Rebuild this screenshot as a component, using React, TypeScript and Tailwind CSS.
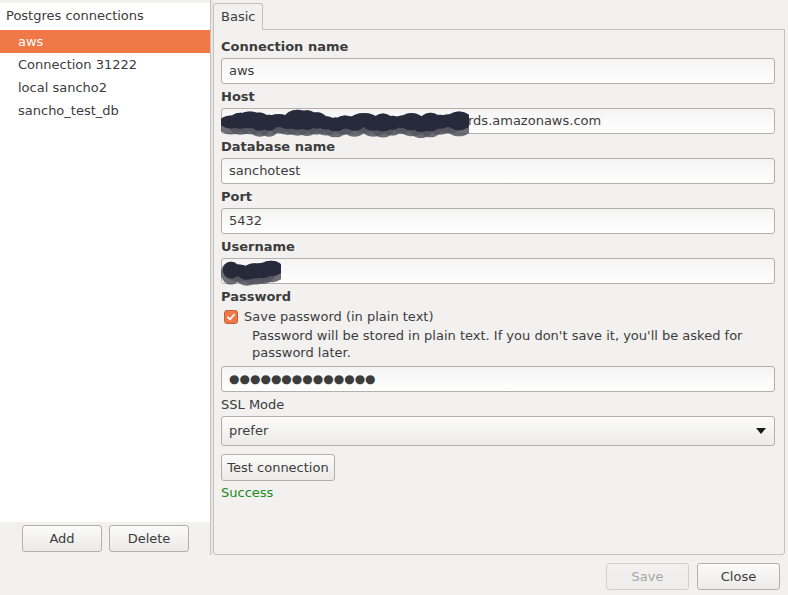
import * as React from "react"

const connections = ["aws", "Connection 31222", "local sancho2", "sancho_test_db"]

function Scribble({ w, h, seed, r = 1 }: { w: number; h: number; seed: number; r?: number }) {
  // redaction scribble drawn over the field text
  const blobs: { cx: number; cy: number; rx: number; ry: number }[] = []
  let s = seed
  const rnd = () => {
    s = (s * 9301 + 49297) % 233280
    return s / 233280
  }
  const n = Math.max(4, Math.round(w / 10))
  for (let i = 0; i < n; i++) {
    blobs.push({
      cx: 10 + (i * (w - 20)) / (n - 1),
      cy: h / 2 + (rnd() - 0.5) * 5,
      rx: (10 + rnd() * 6) * r,
      ry: (9 + rnd() * 4) * r,
    })
  }
  return (
    <svg width={w} height={h} viewBox={`0 0 ${w} ${h}`} className="block">
      {blobs.map((b, i) => (
        <ellipse key={"g" + i} cx={b.cx} cy={b.cy + 3} rx={b.rx} ry={b.ry} fill="#53555f" opacity={0.85} />
      ))}
      {blobs.map((b, i) => (
        <ellipse key={"d" + i} cx={b.cx} cy={b.cy} rx={b.rx - 2} ry={b.ry - 3} fill="#272a3a" />
      ))}
    </svg>
  )
}

function Label({ children, bold = true }: { children: React.ReactNode; bold?: boolean }) {
  return (
    <div className={"flex h-6 items-center pt-[2px] " + (bold ? "font-bold" : "")}>{children}</div>
  )
}

function Field({ children }: { children?: React.ReactNode }) {
  return (
    <div className="relative flex h-[26px] items-center rounded-[3px] border border-[#b3b0ab] bg-gradient-to-b from-[#f4f4f4] to-white px-[7px]">
      {children}
    </div>
  )
}

function Button({ children, className = "", disabled = false }: { children: React.ReactNode; className?: string; disabled?: boolean }) {
  return (
    <div
      className={
        "flex h-[27px] items-center justify-center rounded-[3px] border bg-gradient-to-b " +
        (disabled
          ? "border-[#d3d0cb] from-[#f2f1f0] to-[#eeedec] text-[#a8a6a3] "
          : "border-[#b3b0ab] from-[#fbfbfa] to-[#ebeae8] text-[#3c3c3c] ") +
        className
      }
    >
      {children}
    </div>
  )
}

export default function App() {
  return (
    <div
      className="flex h-[595px] w-[788px] flex-col overflow-hidden bg-[#f2f1f0] text-[13px] text-[#3c3c3c]"
      style={{ fontFamily: '"DejaVu Sans", "Liberation Sans", sans-serif' }}
    >
      <div className="flex h-[555px]">
        {/* left pane */}
        <div className="flex w-[210px] flex-col">
          <div className="flex-1 bg-white">
            <div className="flex h-[30px] items-center border-t-[3px] border-[#f2f1f0] pl-[6px] pb-[1px]">
              Postgres connections
            </div>
            {connections.map((c, i) => (
              <div
                key={c}
                className={
                  "flex h-[23px] items-center pl-[18px] " + (i === 0 ? "bg-[#f07746] text-white" : "")
                }
              >
                {c}
              </div>
            ))}
          </div>
          <div className="flex h-[33px] items-start gap-[7px] pl-[22px] pt-[3px]">
            <Button className="w-[80px]">Add</Button>
            <Button className="w-[80px]">Delete</Button>
          </div>
        </div>

        {/* pane separator */}
        <div className="w-[3px] border-l border-[#c7c4bf] bg-[#e8e7e5]" />

        {/* right notebook */}
        <div className="flex flex-1 flex-col pr-[3px] pt-[3px]">
          <div className="flex">
            <div className="relative z-10 -mb-px flex h-[27px] w-[50px] items-center rounded-t-[3px] border border-b-0 border-[#c5c2bd] bg-[#f2f1f0] pl-[7px]">
              Basic
            </div>
          </div>
          <div className="flex flex-1 flex-col rounded-b-[3px] border border-[#c5c2bd] px-[7px] pt-[4px]">
            <div className="pr-[2px]">
              <Label>Connection name</Label>
              <Field>aws</Field>
              <Label>Host</Label>
              <Field>
                <div className="absolute left-[-1px] top-[-5px]">
                  <Scribble w={248} h={36} seed={7} />
                </div>
                <span className="pl-[239px]">rds.amazonaws.com</span>
              </Field>
              <Label>Database name</Label>
              <Field>sanchotest</Field>
              <Label>Port</Label>
              <Field>5432</Field>
              <Label>Username</Label>
              <Field>
                <div className="absolute left-[-1px] top-[-3px]">
                  <Scribble w={60} h={30} seed={3} r={0.9} />
                </div>
              </Field>
              <Label>Password</Label>
              <div className="flex h-[18px] items-center pl-[3px]">
                <div className="flex h-[14px] w-[14px] items-center justify-center rounded-[3px] border border-[#c9602f] bg-[#f07746]">
                  <svg width="10" height="10" viewBox="0 0 10 10">
                    <path d="M1.8 5.2 L4 7.4 L8.2 2.6" stroke="white" strokeWidth="1.8" fill="none" strokeLinecap="round" strokeLinejoin="round" />
                  </svg>
                </div>
                <span className="pl-[6px]">Save password (in plain text)</span>
              </div>
              <div className="pl-[31px] pt-[1px] leading-[17px]">
                Password will be stored in plain text. If you don't save it, you'll be asked for password later.
              </div>
              <div className="h-[5px]" />
              <Field>
                <span className="text-[12px]">●●●●●●●●●●●●●●</span>
              </Field>
              <Label bold={false}>SSL Mode</Label>
              <div className="flex h-[30px] items-center justify-between rounded-[3px] border border-[#b3b0ab] bg-gradient-to-b from-[#fbfbfa] to-[#ecebe9] px-[7px]">
                <span>prefer</span>
                <svg width="10" height="6" viewBox="0 0 10 6" className="mr-[1px]">
                  <path d="M0 0 H10 L5 6 Z" fill="#1a1a1a" />
                </svg>
              </div>
              <div className="pt-[8px]">
                <Button className="w-[114px]">Test connection</Button>
              </div>
              <div className="pt-[2px] text-[#1a8a1a]">Success</div>
            </div>
          </div>
        </div>
      </div>

      {/* dialog buttons */}
      <div className="flex justify-end gap-[8px] pr-[8px] pt-[8px]">
        <Button disabled className="w-[83px]">Save</Button>
        <Button className="w-[83px]">Close</Button>
      </div>
    </div>
  )
}
